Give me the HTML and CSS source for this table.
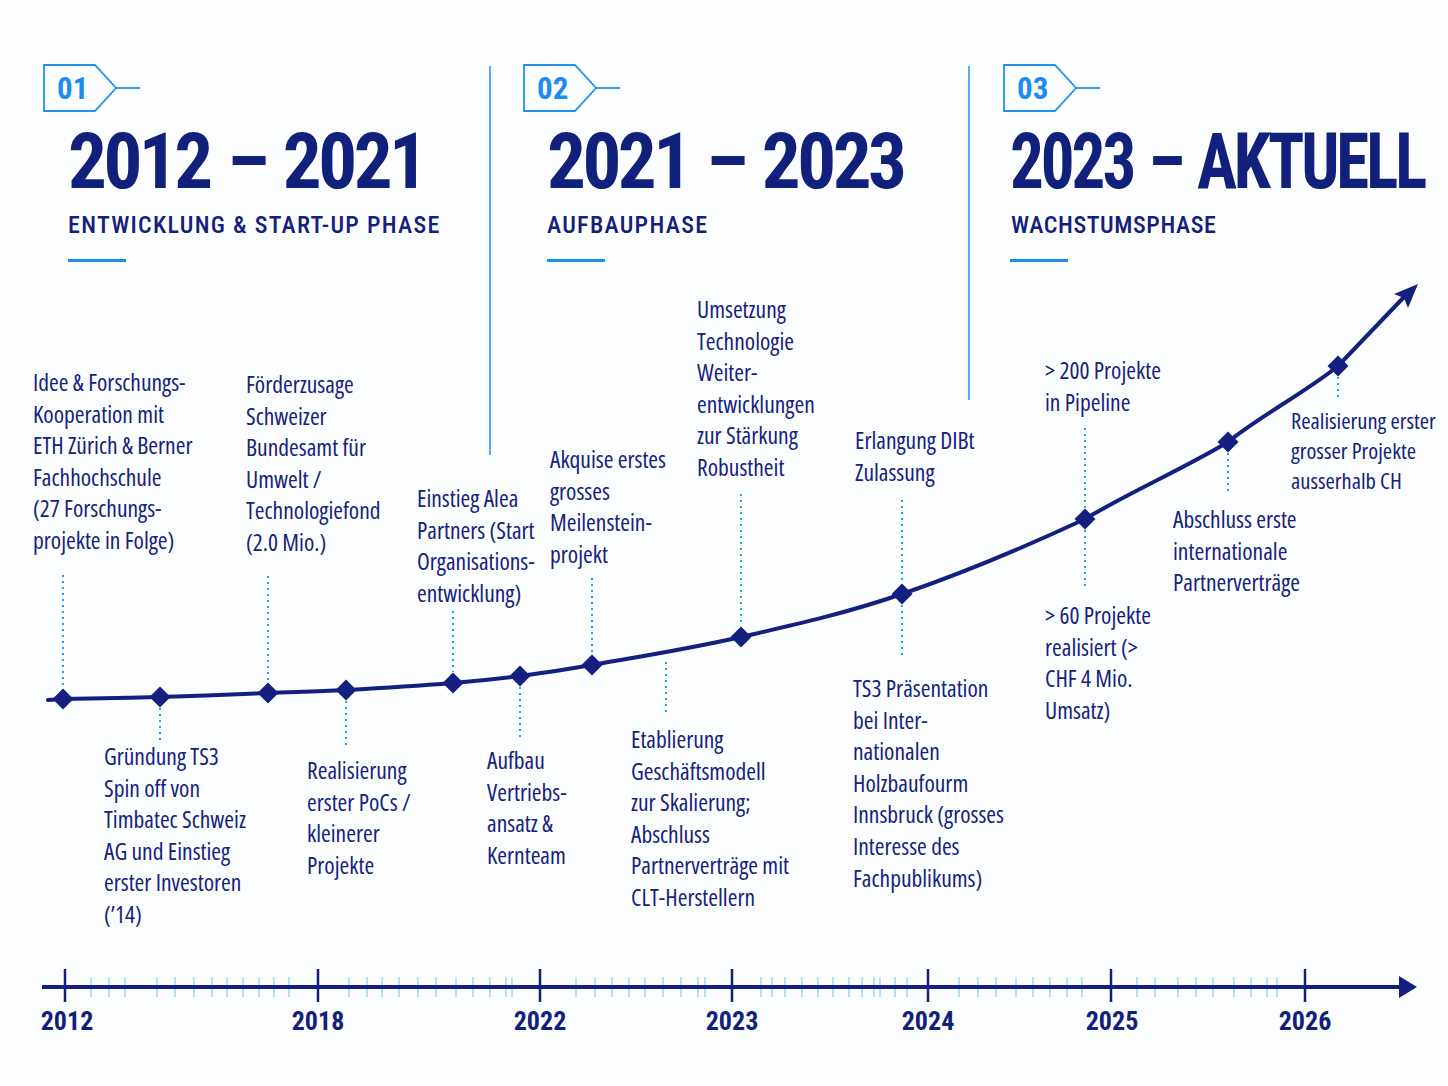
FILE: index.html
```html
<!DOCTYPE html>
<html lang="de">
<head>
<meta charset="utf-8">
<title>Unternehmensentwicklung TS3</title>
<link rel="stylesheet" href="styles.css">
</head>
<body>
<main class="page">
  <header class="phases">
    <section class="phase phase-1">
      <div class="badge">
        <svg class="badge-shape" viewBox="0 0 97 48" width="97" height="48" aria-hidden="true">
          <path d="M1 1H52L73 24L52 47H1Z"/>
          <path d="M73 24H97"/>
        </svg>
        <span class="badge-num">01</span>
      </div>
      <h1 class="range">2012 – 2021</h1>
      <p class="phase-name">ENTWICKLUNG &amp; START-UP PHASE</p>
      <span class="rule"></span>
    </section>
    <section class="phase phase-2">
      <div class="badge">
        <svg class="badge-shape" viewBox="0 0 97 48" width="97" height="48" aria-hidden="true">
          <path d="M1 1H52L73 24L52 47H1Z"/>
          <path d="M73 24H97"/>
        </svg>
        <span class="badge-num">02</span>
      </div>
      <h1 class="range">2021 – 2023</h1>
      <p class="phase-name">AUFBAUPHASE</p>
      <span class="rule"></span>
    </section>
    <section class="phase phase-3">
      <div class="badge">
        <svg class="badge-shape" viewBox="0 0 97 48" width="97" height="48" aria-hidden="true">
          <path d="M1 1H52L73 24L52 47H1Z"/>
          <path d="M73 24H97"/>
        </svg>
        <span class="badge-num">03</span>
      </div>
      <h1 class="range range-wide">2023 – AKTUELL</h1>
      <p class="phase-name">WACHSTUMSPHASE</p>
      <span class="rule"></span>
    </section>
  </header>

  <section class="chart">
    <svg class="chart-svg" viewBox="0 262 1448 824" width="1448" height="824" aria-hidden="true">
      <defs>
        <path id="dia" d="M0 -10.5L10.5 0L0 10.5L-10.5 0Z"/>
      </defs>
      <g class="dividers">
        <path d="M490 66V455"/>
        <path d="M969 66V400"/>
      </g>
      <g class="links">
        <path d="M63 575V688"/>
        <path d="M160 708V742"/>
        <path d="M268 576V683"/>
        <path d="M346 701V748"/>
        <path d="M453 611V672"/>
        <path d="M520 687V738"/>
        <path d="M592 578V654"/>
        <path d="M666 662V714"/>
        <path d="M741 494V626"/>
        <path d="M902 500V583"/>
        <path d="M902 605V658"/>
        <path d="M1085 428V508"/>
        <path d="M1085 530V586"/>
        <path d="M1228 453V494"/>
        <path d="M1338 377V401"/>
      </g>
      <path class="curve" d="M48 700L63 699C81.7 698.5 125.8 698 160 697C194.2 696 237 694.2 268 693C299 691.8 315.2 691.7 346 690C376.8 688.3 424 685.3 453 683C482 680.7 496.8 679 520 676C543.2 673 555.2 671.5 592 665C628.8 658.5 689.3 648.8 741 637C792.7 625.2 844.7 613.7 902 594C959.3 574.3 1030.7 544.3 1085 519C1127.2 493.5 1185.8 467.5 1228 442C1257.3 417.8 1308.7 390.2 1338 366C1349 354.5 1393 308.5 1404 297"/>
      <polygon class="head" points="1418,284 1408,308 1404,298 1394,294"/>
      <g class="dias">
        <use href="#dia" x="63" y="699"/>
        <use href="#dia" x="160" y="697"/>
        <use href="#dia" x="268" y="693"/>
        <use href="#dia" x="346" y="690"/>
        <use href="#dia" x="453" y="683"/>
        <use href="#dia" x="520" y="676"/>
        <use href="#dia" x="592" y="665"/>
        <use href="#dia" x="741" y="637"/>
        <use href="#dia" x="902" y="594"/>
        <use href="#dia" x="1085" y="519"/>
        <use href="#dia" x="1228" y="442"/>
        <use href="#dia" x="1338" y="366"/>
      </g>
      <g class="minor">
        <path d="M91 977V997M109 977V997M125 977V997M157 977V997M175 977V997M194 977V997M212 977V997M227 977V997M243 977V997M259 977V997M274 977V997M289 977V997"/>
        <path d="M349 977V997M367 977V997M382 977V997M399 977V997M418 977V997M436 977V997M456 977V997M473 977V997M490 977V997M506 977V997M512 977V997"/>
        <path d="M576 977V997M595 977V997M612 977V997M629 977V997M645 977V997M663 977V997M681 977V997M698 977V997M705 977V997"/>
        <path d="M761 977V997M772 977V997M785 977V997M802 977V997M818 977V997M833 977V997M849 977V997M862 977V997M874 977V997M880 977V997M895 977V997M907 977V997"/>
        <path d="M959 977V997M978 977V997M996 977V997M1016 977V997M1033 977V997M1050 977V997M1067 977V997M1082 977V997"/>
        <path d="M1137 977V997M1155 977V997M1178 977V997M1196 977V997M1213 977V997M1234 977V997M1251 977V997M1267 977V997M1277 977V997"/>
      </g>
      <path class="axis" d="M42 987H1402"/>
      <polygon class="axis-head" points="1417,987 1399,976 1399,998"/>
      <path class="major" d="M65 969V1002M318 969V1002M540 969V1002M732 969V1002M928 969V1002M1111 969V1002M1305 969V1002"/>
    </svg>

    <p class="note n-idee">Idee &amp; Forschungs-<br>Kooperation mit<br>ETH Zürich &amp; Berner<br>Fachhochschule<br>(27 Forschungs-<br>projekte in Folge)</p>
    <p class="note n-foerder">Förderzusage<br>Schweizer<br>Bundesamt für<br>Umwelt /<br>Technologiefond<br>(2.0 Mio.)</p>
    <p class="note n-alea">Einstieg Alea<br>Partners (Start<br>Organisations-<br>entwicklung)</p>
    <p class="note n-akquise">Akquise erstes<br>grosses<br>Meilenstein-<br>projekt</p>
    <p class="note n-umsetzung">Umsetzung<br>Technologie<br>Weiter-<br>entwicklungen<br>zur Stärkung<br>Robustheit</p>
    <p class="note n-dibt">Erlangung DIBt<br>Zulassung</p>
    <p class="note n-pipeline">&gt; 200 Projekte<br>in Pipeline</p>
    <p class="note note-sm n-gross">Realisierung erster<br>grosser Projekte<br>ausserhalb CH</p>
    <p class="note n-intl">Abschluss erste<br>internationale<br>Partnerverträge</p>
    <p class="note n-realisiert">&gt; 60 Projekte<br>realisiert (&gt;<br>CHF 4 Mio.<br>Umsatz)</p>
    <p class="note n-praes">TS3 Präsentation<br>bei Inter-<br>nationalen<br>Holzbaufourm<br>Innsbruck (grosses<br>Interesse des<br>Fachpublikums)</p>
    <p class="note n-etab">Etablierung<br>Geschäftsmodell<br>zur Skalierung;<br>Abschluss<br>Partnerverträge mit<br>CLT-Herstellern</p>
    <p class="note n-aufbau">Aufbau<br>Vertriebs-<br>ansatz &amp;<br>Kernteam</p>
    <p class="note n-pocs">Realisierung<br>erster PoCs /<br>kleinerer<br>Projekte</p>
    <p class="note n-gruendung">Gründung TS3<br>Spin off von<br>Timbatec Schweiz<br>AG und Einstieg<br>erster Investoren<br>(’14)</p>

    <span class="year y-2012">2012</span>
    <span class="year y-2018">2018</span>
    <span class="year y-2022">2022</span>
    <span class="year y-2023">2023</span>
    <span class="year y-2024">2024</span>
    <span class="year y-2025">2025</span>
    <span class="year y-2026">2026</span>
  </section>
</main>
</body>
</html>
```

FILE: styles.css
```css
* { box-sizing: border-box; }

html, body {
  margin: 0;
  padding: 0;
  background: #fcfdfe;
}

.page {
  position: relative;
  width: 1448px;
  height: 1086px;
  overflow: hidden;
  background: #fcfdfe;
  color: #13207d;
  font-family: Roboto, "Liberation Sans", sans-serif;
}

/* ---------- header ---------- */
.phases {
  display: grid;
  grid-template-columns: 490px 479px 479px;
  height: 262px;
  padding-top: 64px;
}

.phase { display: flex; flex-direction: column; align-items: flex-start; }
.phase-1 { padding-left: 43px; }
.phase-2 { padding-left: 33px; }
.phase-3 { padding-left: 34px; }

.badge {
  position: relative;
  width: 97px;
  height: 48px;
  display: flex;
  align-items: center;
  padding-left: 14px;
}
.badge-shape {
  position: absolute;
  inset: 0;
  fill: none;
  stroke: #2190f2;
  stroke-width: 1.8;
}
.badge-num {
  position: relative;
  font-family: Roboto, sans-serif;
  font-weight: 700;
  font-stretch: 75%;
  font-size: 31px;
  line-height: 1;
  color: #1c8bf0;
}

.range {
  margin: 12px 0 0 25px;
  font-family: Roboto, sans-serif;
  font-size: 77px;
  line-height: 77px;
  font-weight: 700;
  font-stretch: 75%;
  letter-spacing: -3.5px;
  word-spacing: 3px;
  white-space: nowrap;
  color: #11207b;
}
.phase-2 .range { margin-left: 24px; }
.phase-3 .range {
  margin-left: 7px;
  transform: scaleX(0.87);
  transform-origin: left center;
}

.phase-name {
  margin: 12px 0 0 25px;
  font-family: Roboto, sans-serif;
  font-size: 24px;
  line-height: 24px;
  font-weight: 500;
  font-stretch: 75%;
  letter-spacing: 1.3px;
  white-space: nowrap;
  color: #13207d;
}
.phase-2 .phase-name { margin-left: 24px; }
.phase-3 .phase-name { margin-left: 8px; letter-spacing: 0.6px; }

.rule {
  display: block;
  margin: 22px 0 0 25px;
  width: 58px;
  height: 3px;
  background: #1f8ef1;
}
.phase-2 .rule { margin-left: 24px; }
.phase-3 .rule { margin-left: 7px; }

/* ---------- chart canvas ---------- */
.chart {
  position: relative;
  height: 824px;
}
.chart-svg {
  position: absolute;
  left: 0;
  top: 0;
  overflow: visible;
}
.dividers path { stroke: #5aa9f2; stroke-width: 2; fill: none; }
.links path { stroke: #2b9cf3; stroke-width: 2; stroke-dasharray: 2 4; fill: none; }
.curve { fill: none; stroke: #14207f; stroke-width: 4; stroke-linecap: round; }
.head { fill: #14207f; }
.dias use { fill: #14207f; }
.minor path { stroke: #9ad8f8; stroke-width: 1.5; }
.axis { stroke: #14207f; stroke-width: 4; }
.axis-head { fill: #14207f; }
.major { stroke: #14207f; stroke-width: 2.5; }

.note {
  position: absolute;
  margin: 0;
  font-family: "Open Sans", sans-serif;
  font-size: 23.5px;
  line-height: 31.6px;
  font-weight: 500;
  font-stretch: 76%;
  white-space: nowrap;
  color: #14227f;
}
.note-sm { font-size: 22.5px; line-height: 30px; }

.n-idee      { left: 33px;   top: 105px; }
.n-foerder   { left: 246px;  top: 107px; }
.n-alea      { left: 417px;  top: 221px; }
.n-akquise   { left: 550px;  top: 182px; }
.n-umsetzung { left: 697px;  top: 32px; }
.n-dibt      { left: 855px;  top: 163px; }
.n-pipeline  { left: 1045px; top: 93px; }
.n-gross     { left: 1291px; top: 144px; }
.n-intl      { left: 1173px; top: 242px; }
.n-realisiert{ left: 1045px; top: 338px; }
.n-praes     { left: 853px;  top: 411px; }
.n-etab      { left: 631px;  top: 462px; }
.n-aufbau    { left: 487px;  top: 483px; }
.n-pocs      { left: 307px;  top: 493px; }
.n-gruendung { left: 104px;  top: 479px; }

.year {
  position: absolute;
  top: 746px;
  transform: translateX(-50%);
  font-family: Roboto, sans-serif;
  font-size: 26px;
  line-height: 26px;
  font-weight: 700;
  font-stretch: 75%;
  color: #11207b;
}
.y-2012 { left: 67px; }
.y-2018 { left: 318px; }
.y-2022 { left: 540px; }
.y-2023 { left: 732px; }
.y-2024 { left: 928px; }
.y-2025 { left: 1112px; }
.y-2026 { left: 1305px; }
```
